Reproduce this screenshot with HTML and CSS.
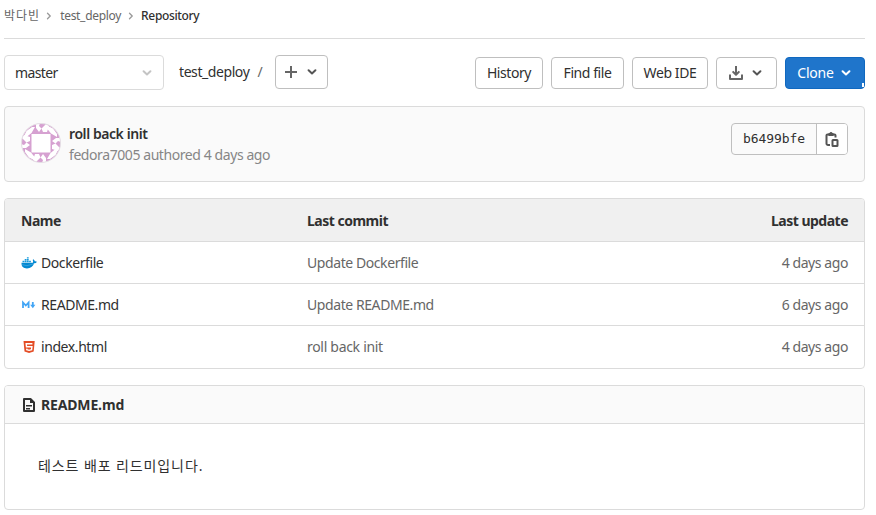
FILE: index.html
```
<!DOCTYPE html>
<html lang="ko">
<head>
<meta charset="utf-8">
<title>Repository</title>
<link rel="stylesheet" href="styles.css">
</head>
<body>
<svg class="defs" aria-hidden="true">
  <symbol id="down" viewBox="0 0 10 6"><path d="M1.6 1.300 5 4.500 8.400 1.300" fill="none" stroke="currentColor" stroke-width="2" stroke-linecap="round" stroke-linejoin="round"/></symbol>
  <symbol id="next" viewBox="0 0 6 8"><path d="M1.500 1.300 4.200 4 1.500 6.700" fill="none" stroke="currentColor" stroke-width="1.300" stroke-linecap="round"/></symbol>
</svg>
<nav class="crumbs">
  <a class="owner">박다빈</a><svg class="next"><use href="#next"/></svg><a class="project">test_deploy</a><svg class="next"><use href="#next"/></svg><strong>Repository</strong>
</nav>
<div class="toolbar">
  <button class="branch"><span>master</span><svg class="down"><use href="#down"/></svg></button>
  <div class="path"><span class="root">test_deploy</span><span class="slash">/</span></div>
  <button class="btn add">
    <svg width="12" height="12" viewBox="0 0 12 12"><path d="M6 0v12M0 6h12" stroke="currentColor" stroke-width="2"/></svg>
    <svg class="down"><use href="#down"/></svg>
  </button>
  <div class="actions">
    <button class="btn history">History</button>
    <button class="btn find">Find file</button>
    <button class="btn ide">Web IDE</button>
    <button class="btn download">
      <svg width="14" height="14" viewBox="0 0 14 14"><path d="M7 0v8M3.600 5.400 7 8.800l3.400-3.400M1 8.500V13h12V8.500" fill="none" stroke="currentColor" stroke-width="2" stroke-linejoin="round"/></svg>
      <svg class="down"><use href="#down"/></svg>
    </button>
    <button class="btn clone"><span>Clone</span><svg class="down"><use href="#down"/></svg></button>
  </div>
</div>
<section class="commit">
  <svg class="avatar" viewBox="0 0 40 40">
    <clipPath id="round"><circle cx="20" cy="20" r="19.500"/></clipPath>
    <g clip-path="url(#round)" fill="#d6a1d1">
      <path d="M0 0h40v40H0z"/>
      <g fill="#fff">
        <path d="M10.500 11h19v18.500h-19z"/>
        <g id="side"><path d="M2 15 5.500 8 11 4l3 0-3.500 6-5 4z M15 0h4l-1 3 2.500 2.500L18 9l-3-4z M20.500 5.500 25 1l3 2-2 6-4 0z"/></g>
        <use href="#side" transform="rotate(90 20 20)"/>
        <use href="#side" transform="rotate(180 20 20)"/>
        <use href="#side" transform="rotate(270 20 20)"/>
      </g>
    </g>
    <circle cx="20" cy="20" r="19.500" fill="none" stroke="#e4dfe4"/>
  </svg>
  <div class="message"><strong>roll back init</strong><span>fedora7005 authored 4 days ago</span></div>
  <div class="sha"><code>b6499bfe</code><button>
    <svg width="14" height="16" viewBox="0 0 14 16"><path d="M5 14H3a1.500 1.500 0 0 1-1.500-1.500V4.500A1 1 0 0 1 2.500 3.500h7a1 1 0 0 1 1 1V6.500" fill="none" stroke="currentColor" stroke-width="2"/><path d="M3.500 5V2h1a1.600 1.600 0 0 1 3 0h1v3z" fill="currentColor"/><rect x="7.500" y="9" width="5" height="6" rx=".5" fill="none" stroke="currentColor" stroke-width="2"/></svg>
  </button></div>
</section>
<div class="files">
  <div class="row head"><span>Name</span><span>Last commit</span><span class="when">Last update</span></div>
  <div class="row">
    <span class="name"><svg viewBox="0 0 16 14"><path d="M.5 6.700h11.300c.5-.7.4-1.700-.1-2.600l.8-.8c.8.6 1.200 1.300 1.200 2 .8-.2 1.600 0 2.200.4-.6 1.300-1.600 1.600-2.800 1.600C11.900 10.800 9.600 12.400 6 12.400 2.300 12.400.3 10.400.5 6.700z" fill="#0288d1"/><path d="M1.500 4.700h1.800v1.600H1.500zM3.700 4.700h1.800v1.600H3.700zM5.900 4.700h1.800v1.600H5.900zM8.100 4.700h1.800v1.600H8.100zM3.700 2.900h1.800v1.500H3.700zM5.900 2.900h1.800v1.500H5.900zM5.900 1.200h1.800v1.400H5.900z" fill="#189bdc"/><path d="m1 8.700 5 1 7-2" fill="none" stroke="#69b9e5" stroke-width=".5"/></svg>Dockerfile</span>
    <span>Update Dockerfile</span><span class="when">4 days ago</span>
  </div>
  <div class="row">
    <span class="name"><svg viewBox="0 0 16 14"><path d="M2 10V4.500L4.800 7.500 7.600 4.500V10M11.800 4V8" fill="none" stroke="#42a5f5" stroke-width="1.800"/><path d="M9.200 6.700h5.200l-2.600 3.500z" fill="#42a5f5"/></svg>README.md</span>
    <span>Update README.md</span><span class="when">6 days ago</span>
  </div>
  <div class="row">
    <span class="name"><svg viewBox="0 0 16 14"><path d="M2.500 1h11.200l-1 10.600-4.600 1.400-4.600-1.400z" fill="#e44d26"/><path d="M11.400 3.700H5.200l.3 3h5.400l-.3 2.900-2.500.7-2.300-.7-.1-1" fill="none" stroke="#fff" stroke-width="1.400"/></svg>index.html</span>
    <span class="loose">roll back init</span><span class="when">4 days ago</span>
  </div>
</div>
<article class="readme">
  <header><svg width="12" height="14" viewBox="0 0 12 14"><path d="M1 1h6.500L11 4.500V13H1z" fill="none" stroke="currentColor" stroke-width="2" stroke-linejoin="round"/><path d="M7 1v4h4zM3 7h6v1.400H3zM3 10h4v1.400H3z" fill="currentColor"/></svg><strong>README.md</strong></header>
  <p>테스트 배포 리드미입니다.</p>
</article>
</body>
</html>
```
FILE: styles.css
```
* { box-sizing: border-box; }
body {
  margin: 0;
  padding: 0 11px 0 4px;
  background: #fff;
  color: #303030;
  font: 14px/20px "Noto Sans", "Noto Sans CJK KR", sans-serif;
  letter-spacing: -0.42px;
}
svg { flex: none; display: block; }
.defs { position: absolute; width: 0; height: 0; }
button { font: inherit; color: inherit; letter-spacing: inherit; margin: 0; }
.down { width: 10px; height: 6px; }
.crumbs {
  height: 39px;
  padding-bottom: 7px;
  border-bottom: 1px solid #dbdbdb;
  display: flex;
  align-items: center;
  font-size: 12px;
  letter-spacing: -0.3px;
  color: #666;
}
.crumbs .owner { letter-spacing: 1px; }
.crumbs .next { width: 6px; height: 8px; margin: 0 8px 0 6px; color: #999; }
.crumbs .project + .next { margin: 0 7px; }
.crumbs strong { font-weight: 500; letter-spacing: -0.35px; color: #303030; }
.toolbar { display: flex; align-items: flex-start; padding-top: 16px; height: 67px; }
.branch {
  width: 160px;
  height: 35px;
  padding: 0 11px 0 10px;
  border: 1px solid #dbdbdb;
  border-radius: 4px;
  background: #fff;
  display: flex;
  align-items: center;
  justify-content: space-between;
}
.branch span { letter-spacing: -0.6px; }
.branch .down { color: #c4c4c4; }
.path { display: flex; width: 111px; padding: 7px 0 0 15px; }
.slash { margin-left: 8px; color: #666; }
.btn {
  height: 32px;
  border: 1px solid #bfbfbf;
  border-radius: 4px;
  background: #fff;
  padding: 0;
  display: flex;
  align-items: center;
  justify-content: center;
  white-space: nowrap;
}
.btn svg { color: #666; }
.btn .down { color: #555; }
.add { width: 53px; height: 34px; padding-right: 1px; gap: 10px; }
.actions { margin-left: auto; margin-top: 2px; display: flex; gap: 8px; }
.history { width: 68px; }
.find { width: 73px; }
.ide { width: 76px; letter-spacing: -0.4px; }
.download { width: 61px; padding-right: 2px; gap: 9px; }
.clone { width: 80px; padding-right: 2px; gap: 7px; color: #fff; background: #1f75cb; border-color: #1068bf; position: relative; }
.clone span { letter-spacing: -0.2px; }
.clone .down { color: #fff; }
.clone::after { content: ""; position: absolute; right: 0; bottom: 1px; width: 2px; height: 4px; background: #fff; }
.commit {
  height: 76px;
  padding: 16px;
  border: 1px solid #dbdbdb;
  border-radius: 4px;
  background: #fafafa;
  display: flex;
  align-items: flex-start;
}
.avatar { width: 40px; height: 40px; }
.message { display: flex; flex-direction: column; margin-left: 8px; line-height: 21px; color: #868686; }
.message strong { font-weight: 600; color: #303030; }
.sha {
  margin-left: auto;
  width: 117px;
  height: 32px;
  border: 1px solid #bfbfbf;
  border-radius: 4px;
  display: flex;
  overflow: hidden;
}
.sha code { width: 84px; line-height: 29px; text-align: center; font-family: "DejaVu Sans Mono", monospace; font-size: 13px; letter-spacing: -0.1px; }
.sha button { flex: 1; padding: 0; border: 0; border-left: 1px solid #bfbfbf; background: #fff; color: #555; display: grid; place-items: center; }
.files { margin-top: 16px; border: 1px solid #dbdbdb; border-radius: 4px; overflow: hidden; }
.row {
  display: grid;
  grid-template-columns: 286px 1fr 160px;
  align-items: center;
  height: 42px;
  padding: 0 16px;
  border-bottom: 1px solid #dbdbdb;
  color: #666;
}
.row:last-child { border-bottom: 0; }
.head { height: 43px; padding-top: 2px; background: #f0f0f0; color: #303030; font-weight: 700; letter-spacing: -0.5px; }
.name { display: flex; align-items: center; color: #303030; }
.name svg { width: 16px; height: 14px; margin-right: 4px; }
.loose { letter-spacing: -0.3px; }
.when { text-align: right; }
.readme { margin-top: 16px; height: 125px; border: 1px solid #dbdbdb; border-radius: 4px; overflow: hidden; }
.readme header { height: 38px; padding-left: 18px; display: flex; align-items: center; gap: 6px; background: #fafafa; border-bottom: 1px solid #dbdbdb; letter-spacing: -0.15px; }
.readme p { margin: 32px 0 0 33px; letter-spacing: 0.9px; }
```
